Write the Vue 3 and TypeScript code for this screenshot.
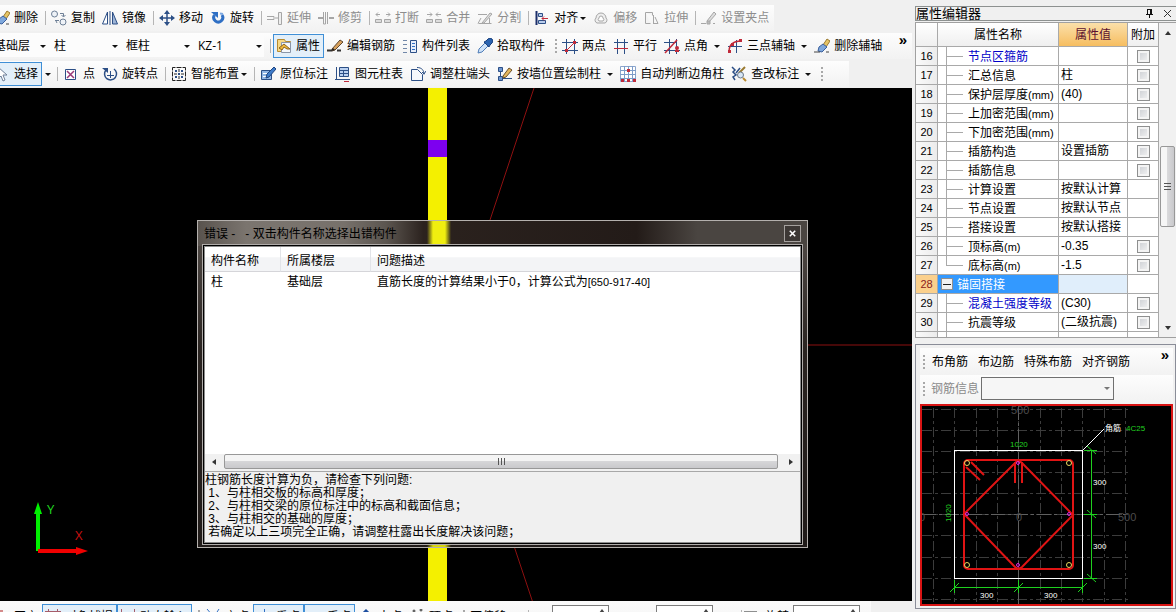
<script setup lang="ts">
import { ref } from 'vue'

type Shape = [d: string, stroke: string, fill?: string, width?: number]

interface Tool {
  kind: 'tool' | 'sep' | 'grip' | 'arrow'
  icon?: string
  label?: string
  off?: boolean
  on?: boolean
  drop?: 'near' | 'far'
}

const tool = (icon: string, label: string, extra: Partial<Tool> = {}): Tool => ({ kind: 'tool', icon, label, ...extra })
const sep: Tool = { kind: 'sep' }
const grip: Tool = { kind: 'grip' }

const navy = '#2c4f86'
const blue = '#2f6fc4'
const red = '#c02a3a'
const gray = '#a6a6a6'

const icons: Record<string, Shape[]> = {
  erase: [
    ['M9 7L13 1l3 2-4 6z', '#9a7a30', '#e6c566', 1],
    ['M5 9l4-3 4 3-5 5-4-1z', '#3a5f9c', '#7fa8dc', 1],
    ['M6 10l4 3', '', '#fff'],
    ['M0 14h6M12 14h3', '#444', 'none', 1],
  ],
  copy: [
    ['M.5 4a3 3 0 1 0 6 0a3 3 0 1 0-6 0', '#6d7f96', '#eef2f7', 1],
    ['M9 12a3 3 0 1 0 6 0a3 3 0 1 0-6 0', '#6d7f96', '#eef2f7', 1],
    ['M9 3.500h3.500v3M10.500 5l2 2 2-2', '#6d7f96', 'none', 1],
    ['M4 10.500h4M4.500 10l1.500 3', '#6d7f96', 'none', 1],
  ],
  mirror: [
    ['M5.500 2v12h-5z', navy, '#fff', 1],
    ['M10.500 2v12h5z', navy, '#9db4d6', 1],
    ['M8 1v14', navy, 'none', 1],
  ],
  move: [
    ['M8 2v12M2 8h12', navy, 'none', 1.5],
    ['M8 0l3 4H5zM8 16l3-4H5zM0 8l4-3v6zM16 8l-4-3v6z', '', navy],
  ],
  rotate: [
    ['M4.500 5a4.500 4.500 0 1 0 7.500 0', blue, 'none', 3],
    ['M1 2h7v6z', '', blue],
    ['M10 3.500l3 .5', '#7aa6e0', 'none', 2],
  ],
  extend: [
    ['M0 6.500h7v3H0M8 8h3', gray, 'none', 1],
    ['M11.500 2.500h3v12h-3z', gray, '#eee', 1],
  ],
  trim: [
    ['M0 8h5M11 8h5', gray, 'none', 2],
    ['M5.500 2v12h2V2M9.500 2v12', gray, 'none', 1],
  ],
  split2: [
    ['M1 4.500h4M11 4.500h4M3 2.500L1 4.500l2 2M13 2.500l2 2-2 2', gray, 'none', 1],
    ['M.5 9.500h6v3h-6zM9.500 9.500h6v3h-6z', gray, '#ddd', 1],
  ],
  merge: [
    ['M1 4.500h5M10 4.500h5M4 2.500l2 2-2 2M12 2.500l-2 2 2 2', gray, 'none', 1],
    ['M.5 9.500h6v3h-6zM9.500 9.500h6v3h-6z', gray, '#ddd', 1],
  ],
  cut: [
    ['M1 4.500h9M1.500 13.500h13M1 13.500L4 8', gray, 'none', 1],
    ['M5 13L13 3l2 1-8 9z', gray, '#ddd', 1],
    ['M12.500 8v5', gray, 'none', 1],
  ],
  align: [
    ['M2.500 1v14', '#1c2f6b', 'none', 2],
    ['M4.500 3.500h4v3h-4z', navy, '#b9cdec', 1],
    ['M4.500 10.500h7v3h-7z', navy, '#b9cdec', 1],
    ['M14 8.500H8M10 6.500L8 8.500l2 2', red, 'none', 1],
  ],
  offset: [
    ['M4 13a3 3 0 0 1-1-5a5 5 0 0 1 10 0a3 3 0 0 1-1 5z', gray, '#eee', 1],
    ['M6 11a2 2 0 0 1 0-3a2 2 0 0 1 4 0a2 2 0 0 1 0 3z', gray, '#fff', 1],
  ],
  stretch: [
    ['M1.500 2.500h7v3M1.500 2.500v11h5', gray, '#f3f3f3', 1],
    ['M9.500 5v9M11 7l3 6.500H9', gray, 'none', 1],
  ],
  clamp: [
    ['M0 13.500h5M12 13.500h2', gray, 'none', 1],
    ['M6 11L13 2l2 2-7 8z', gray, '#ddd', 1],
    ['M6 11h3v3H6z', gray, '#bbb', 1],
  ],
  props: [
    ['M1.500 1.500h7l1 2h5v10h-13z', '#b88a2e', '#f7d884', 1],
    ['M5.500 4.500h9v10h-9z', '#8a96a8', '#f6f8fb', 1],
    ['M3 10l5-4 6 5h-3l-3-2-2 3z', '#8a6420', '#f0b83c', 1],
  ],
  editbar: [
    ['M0 12.500h5M10 12.500h4', '#333', 'none', 2],
    ['M5 11L13 2l3 2-8 8-3 1z', '#5c4630', '#d7a05c', 1],
    ['M4 13l4-1-2-2z', '', '#222'],
  ],
  list: [
    ['M1 2.500h4M1 6.500h4M1 10.500h4M1 14.500h4', '#7187a8', 'none', 1],
    ['M8.500 2.500h6v12h-6z', navy, '#e7eefa', 1],
    ['M10 5.500h3M10 8.500h3M10 11.500h3', blue, 'none', 1],
  ],
  pick: [
    ['M1 15l1-4 6-6 3 3-6 6z', '#4f7db8', '#cfe2f7', 1],
    ['M7 4l5 5 1-2 2-2a2.500 2.500 0 0 0-4-4L9 3z', '#193f7c', '#2a63b0', 1],
  ],
  twopt: [
    ['M4.500 1v15M12.500 1v15M0 4.500h16M0 12.500h16', navy, 'none', 1],
    ['M4 13L13 4', red, 'none', 1],
    ['M3 11h3v3H3zM11 3h3v3h-3z', '', red],
  ],
  parallel: [
    ['M4.500 1v15M11.500 1v15M1 4.500h14', navy, 'none', 1],
    ['M1 10.500h14', red, 'none', 1],
  ],
  angle: [
    ['M5.500 1v15M12.500 1v15M0 4.500h13M0 12.500h16', navy, 'none', 1],
    ['M1 15L13 2', red, 'none', 1.5],
    ['M11 10a2 2 0 1 0 4 0a2 2 0 1 0-4 0M11 12h4v2h-4z', '', red],
  ],
  arc: [
    ['M9.500 2v13M1 8.500h14', navy, 'none', 1],
    ['M2 14C2 7 6 3 14 3', red, 'none', 1.5],
    ['M1 12h3v3H1zM12 1h3v3h-3zM4 5h3v3H4z', '', red],
  ],
  select: [['M4 1v12l3-3 2 5 2-1-2-5h4z', '#6e7f98', '#fff', 1]],
  point: [
    ['M2.500 3.500h10v10h-10z', navy, '#fff', 1],
    ['M4 5l7 7M11 5l-7 7', '#9a3a78', 'none', 1.5],
  ],
  rotpt: [
    ['M4 4a6 6 0 1 0 8-1', navy, 'none', 1.5],
    ['M0 2h6v5z', '', navy],
    ['M8.500 5v7M5 9.500h7', navy, 'none', 1],
  ],
  smart: [
    ['M1.500 1.500h13v13h-13z', '#222', 'none', 1],
    ['M5 0v16M11 0v16M0 5h16M0 11h16', '#fff', 'none', 1],
    ['M8 3v3M8 10v3M3 8h3M10 8h3', '#222', 'none', 1],
    ['M4 4h2v2H4zM10 4h2v2h-2zM4 10h2v2H4zM10 10h2v2h-2zM7 7h2v2H7z', '', navy],
  ],
  origin: [
    ['M1.500 4.500h10v9h-10z', navy, '#8fb4e4', 1],
    ['M3 7.500h5M3 10.500h4', '#fff', 'none', 1],
    ['M6 12l1-4 7-7 2 2-7 8z', '#1f4480', '#3d7bc9', 1],
  ],
  chart: [
    ['M1.500 1v12M0 13.500h15', navy, 'none', 1],
    ['M4.500 1.500h9v9h-9z', navy, '#b9d0f0', 1],
    ['M5 4.500h8M5 7.500h8M8.500 5v5', navy, 'none', 1],
    ['M9 15.500h5', red, 'none', 1],
  ],
  endcap: [
    ['M1.500 3.500h6l5 5v6h-11z', navy, '#f4f7fc', 1],
    ['M7 1.500c5 0 7 3 7 7M12 6l2 2 2-3', navy, 'none', 1],
  ],
  wallcol: [
    ['M1.500 1.500h4v4h-4zM1.500 10.500h4v4h-4z', navy, '#6f97d0', 1],
    ['M3.500 6v4M6 12.500h9', navy, 'none', 1],
    ['M6 10L12 2l3 2-6 7-3 1z', '#6b512a', '#e4b65e', 1],
  ],
  grid: [
    ['M.5 .5h15v15H.5z', '#8aa5cc', '#fff', 1],
    ['M4.500 0v16M8.500 0v16M12.500 0v16M0 4.500h16M0 8.500h16M0 12.500h16', '#7d9cc8', 'none', 1],
    ['M7 3h3v3H7zM1 13h3v3H1zM7 13h3v3H7zM13 13h3v3h-3z', '', red],
  ],
  review: [
    ['M1 1l3 3-2 2 3 3-3 2 2 3M9 2l-4 5', navy, 'none', 1.5],
    ['M14 1L8 7', '#9a7a30', 'none', 2],
    ['M6.500 9a3 3 0 1 0 6 0a3 3 0 1 0-6 0', '#6a7786', '#d7e6f5', 1],
    ['M12 12l3 3', '#b98a30', 'none', 2],
  ],
  ortho: [['M0 1h9v8H0z', '', '#d48a8a']],
  snap: [['M3.500 0v12M12.500 0v12M0 2.500h16', '#a65d6a', 'none', 1]],
  dyn: [['M1.500 0v12M14.500 0v12M1 3.500h13', '#a65d6a', 'none', 1]],
  cross: [['M2 0l11 13M14 0L5 14', blue, 'none', 1]],
  heavy: [['M8.500 0v13M1 13.500h14', blue, 'none', 1]],
  perp: [['M8.500 8v6M1 13.500h14', blue, 'none', 1]],
  mid: [['M8 1l6 6H2z', '#1e4fa0', '#dfeafb', 1.5]],
  vertex: [['M4 2a1 1 0 1 0 2 0a1 1 0 1 0-2 0M11 1a1 1 0 1 0 2 0a1 1 0 1 0-2 0M4 6v8M12 6v8', '#333', 'none', 1]],
}

const editTools: Tool[] = [
  tool('erase', '删除'), sep,
  tool('copy', '复制'), tool('mirror', '镜像'), sep,
  tool('move', '移动'), tool('rotate', '旋转'), sep,
  tool('extend', '延伸', { off: true }), tool('trim', '修剪', { off: true }), sep,
  tool('split2', '打断', { off: true }), tool('merge', '合并', { off: true }), tool('cut', '分割', { off: true }), sep,
  tool('align', '对齐', { drop: 'near' }),
  tool('offset', '偏移', { off: true }), tool('stretch', '拉伸', { off: true }), sep,
  tool('clamp', '设置夹点', { off: true }),
]

const memberTools: Tool[] = [
  sep,
  tool('props', '属性', { on: true }),
  tool('editbar', '编辑钢筋'), tool('list', '构件列表'), tool('pick', '拾取构件'), grip,
  tool('twopt', '两点'), tool('parallel', '平行'), tool('angle', '点角', { drop: 'far' }),
  tool('arc', '三点辅轴', { drop: 'far' }), tool('erase', '删除辅轴'),
]

const drawTools: Tool[] = [
  tool('select', '选择', { on: true }), { kind: 'arrow' }, sep,
  tool('point', '点'), tool('rotpt', '旋转点'), sep,
  tool('smart', '智能布置', { drop: 'near' }), sep,
  tool('origin', '原位标注'), tool('chart', '图元柱表'), tool('endcap', '调整柱端头'),
  tool('wallcol', '按墙位置绘制柱', { drop: 'far' }),
  tool('grid', '自动判断边角柱'), tool('review', '查改标注', { drop: 'far' }), grip,
]

const snapTools: Tool[] = [
  tool('ortho', '正交'), tool('snap', '对象捕捉', { on: true }), tool('dyn', '动态输入', { on: true }), grip,
  tool('cross', '交点'), tool('heavy', '重点', { on: true }), tool('perp', '垂点', { on: true }),
  tool('mid', '中点'), tool('vertex', '顶点'), grip,
]

const pickers = [
  { name: '楼层', value: '基础层' },
  { name: '构件类型', value: '柱' },
  { name: '构件分类', value: '框柱' },
  { name: '构件', value: 'KZ-1' },
]

interface Prop {
  no: number
  name: string
  unit?: string
  value?: string
  check?: boolean
  link?: boolean
  last?: boolean
  group?: boolean
}

const props: Prop[] = [
  { no: 16, name: '节点区箍筋', check: true, link: true },
  { no: 17, name: '汇总信息', value: '柱', check: true },
  { no: 18, name: '保护层厚度', unit: '(mm)', value: '(40)', check: true },
  { no: 19, name: '上加密范围', unit: '(mm)', check: true },
  { no: 20, name: '下加密范围', unit: '(mm)', check: true },
  { no: 21, name: '插筋构造', value: '设置插筋', check: true },
  { no: 22, name: '插筋信息', check: true },
  { no: 23, name: '计算设置', value: '按默认计算' },
  { no: 24, name: '节点设置', value: '按默认节点' },
  { no: 25, name: '搭接设置', value: '按默认搭接' },
  { no: 26, name: '顶标高', unit: '(m)', value: '-0.35', check: true },
  { no: 27, name: '底标高', unit: '(m)', value: '-1.5', check: true, last: true },
  { no: 28, name: '锚固搭接', group: true },
  { no: 29, name: '混凝土强度等级', value: '(C30)', check: true, link: true },
  { no: 30, name: '抗震等级', value: '(二级抗震)', check: true },
]

const notes = [
  '柱钢筋长度计算为负，请检查下列问题:',
  ' 1、与柱相交板的标高和厚度；',
  ' 2、与柱相交梁的原位标注中的标高和截面信息；',
  ' 3、与柱相交的基础的厚度；',
  ' 若确定以上三项完全正确，请调整柱露出长度解决该问题；',
]

const rebarTools = ['布角筋', '布边筋', '特殊布筋', '对齐钢筋']
const gridX = [933, 954, 976, 997, 1018, 1040, 1061, 1082, 1104, 1125]
const gridY = [409, 430, 451, 472, 493, 514, 535, 557, 578, 599]

const toolRows = [
  { id: 'edit', items: editTools },
  { id: 'member', items: memberTools },
  { id: 'draw', items: drawTools },
]

const offsetX = ref('0')
const offsetY = ref('0')
const turn = ref('0.000')
</script>

<template>
  <div class="app">
    <main class="work">
      <header class="bars">
        <div v-for="row in toolRows" :key="row.id" class="bar" :class="row.id">
          <template v-if="row.id === 'member'">
            <label v-for="p in pickers" :key="p.name" class="picker">
              <select :aria-label="p.name"><option>{{ p.value }}</option></select>
              <i class="tri"></i>
            </label>
          </template>
          <template v-for="(t, i) in row.items" :key="i">
            <i v-if="t.kind === 'sep'" class="sep"></i>
            <i v-else-if="t.kind === 'grip'" class="grip"></i>
            <button v-else-if="t.kind === 'arrow'" class="drop far" aria-label="更多选择"><i class="tri"></i></button>
            <button v-else class="tool" :class="{ on: t.on }" :disabled="t.off">
              <svg class="ico" viewBox="0 0 16 16">
                <path v-for="(s, k) in icons[t.icon!]" :key="k" :d="s[0]" :stroke="s[1] || 'none'" :fill="s[2] || 'none'" :stroke-width="s[3] || 1" />
              </svg>
              <span>{{ t.label }}</span>
              <span v-if="t.drop" class="drop" :class="t.drop"><i class="tri"></i></span>
            </button>
          </template>
          <button v-if="row.id === 'member'" class="more">»</button>
        </div>
      </header>

      <section class="canvas">
        <svg class="scene">
          <path d="M534 0L490 132M514 458L538 530" stroke="#8c1010" fill="none" />
          <line x1="800" y1="257" x2="100%" y2="257" stroke="#8c1010" />
          <rect x="428" y="0" width="19" height="100%" fill="#f4f000" />
          <rect x="428" y="52" width="19" height="17" fill="#7d00f0" />
          <path d="M38 463V424" stroke="#00f000" stroke-width="4" />
          <path d="M38 414l4 12h-8z" fill="#00f000" />
          <path d="M38 463H76" stroke="#f00000" stroke-width="4" />
          <path d="M88 463l-12-4v8z" fill="#f00000" />
          <text x="47" y="426" fill="#20d820" class="axis">Y</text>
          <text x="75" y="452" fill="#c81010" class="axis">X</text>
        </svg>

        <div class="dialog" role="dialog" aria-labelledby="err-title">
          <div class="caption">
            <span id="err-title">错误 -&nbsp;&nbsp; - 双击构件名称选择出错构件</span>
            <button class="close" aria-label="关闭">
              <svg viewBox="0 0 9 9"><path d="M1 1l7 7M8 1L1 8" stroke="#fff" stroke-width="2" /></svg>
            </button>
          </div>
          <div class="content">
            <div class="listing">
              <table class="errors">
                <colgroup><col class="c1" /><col class="c2" /><col /></colgroup>
                <thead><tr><th>构件名称</th><th>所属楼层</th><th>问题描述</th></tr></thead>
                <tbody><tr><td>柱</td><td>基础层</td><td>直筋长度的计算结果小于0，计算公式为<span class="formula">[650-917-40]</span></td></tr></tbody>
              </table>
            </div>
            <div class="hscroll">
              <i class="arr left"></i>
              <div class="hthumb"><i></i><i></i><i></i></div>
              <i class="arr right"></i>
            </div>
            <div class="notes">
              <p v-for="n in notes" :key="n">{{ n }}</p>
            </div>
          </div>
        </div>
      </section>

      <footer class="status">
        <div class="statusbar">
          <template v-for="(t, i) in snapTools" :key="i">
            <i v-if="t.kind === 'grip'" class="grip"></i>
            <button v-else class="tool" :class="{ on: t.on }">
              <svg class="ico" viewBox="0 0 16 16">
                <path v-for="(s, k) in icons[t.icon!]" :key="k" :d="s[0]" :stroke="s[1] || 'none'" :fill="s[2] || 'none'" :stroke-width="s[3] || 1" />
              </svg>
              <span>{{ t.label }}</span>
            </button>
          </template>
          <button class="plain">不偏移</button>
          <i class="sep"></i>
          <label class="num xo">X=<input v-model="offsetX" /><i class="spin"></i></label>
          <label class="num yo">Y=<input v-model="offsetY" /><i class="spin"></i></label>
          <i class="sep"></i>
          <label class="turn"><input type="checkbox" class="tick" />旋转</label>
          <label class="num ro"><input v-model="turn" aria-label="旋转角度" /><i class="spin"></i></label>
        </div>
      </footer>
    </main>

    <aside class="side">
      <div class="title">
        <h1>属性编辑器</h1>
        <button aria-label="固定"><svg viewBox="0 0 9 9"><path d="M2.500 0v5M2 .5h4M1 5.500h7M4.500 6v3" stroke="#111" fill="none" /><path d="M5 0h2v5H5z" fill="#111" /></svg></button>
        <button aria-label="关闭"><svg viewBox="0 0 9 9"><path d="M1 1l7 7M8 1L1 8" stroke="#333" /></svg></button>
      </div>
      <div class="propbox">
        <table class="props">
          <colgroup><col class="no" /><col /><col class="val" /><col class="add" /></colgroup>
          <thead><tr><th></th><th>属性名称</th><th class="hot">属性值</th><th class="tight">附加</th></tr></thead>
          <tbody>
            <tr v-for="p in props" :key="p.no" :class="{ group: p.group }">
              <th scope="row">{{ p.no }}</th>
              <td>
                <div class="name" :class="{ link: p.link }">
                  <button v-if="p.group" class="fold" aria-label="折叠"></button>
                  <i v-else class="branch" :class="{ last: p.last }"></i>
                  <span>{{ p.name }}<small v-if="p.unit">{{ p.unit }}</small></span>
                </div>
              </td>
              <td class="value">{{ p.value }}</td>
              <td><div class="center"><input v-if="p.check" type="checkbox" class="tick" :aria-label="p.name + '附加'" /></div></td>
            </tr>
            <tr><th></th><td><div class="name"><i class="branch"></i></div></td><td></td><td></td></tr>
          </tbody>
        </table>
        <div class="vscroll">
          <i class="arr up"></i>
          <div class="vthumb"><i></i><i></i><i></i></div>
          <i class="arr down"></i>
        </div>
      </div>

      <section class="rebar">
        <div class="rbar">
          <i class="grip"></i>
          <button v-for="r in rebarTools" :key="r">{{ r }}</button>
          <button class="more">»</button>
        </div>
        <label class="rbar info">
          <i class="grip"></i>
          <span>钢筋信息</span>
          <span class="combo"><select disabled><option></option></select><i class="tri"></i></span>
        </label>
        <div class="section">
          <svg viewBox="922 406 249 198" preserveAspectRatio="xMinYMin meet">
            <g stroke="#3c3c3c" stroke-dasharray="10 3 3 3">
              <line v-for="x in gridX" :key="x" :x1="x + 0.5" y1="408" :x2="x + 0.5" y2="602" />
              <line v-for="y in gridY" :key="y" x1="922" :y1="y + 0.5" x2="1128" :y2="y + 0.5" />
            </g>
            <path d="M1018.500 406v198M922 514.500h206" stroke="#606060" stroke-dasharray="14 3 3 3" />
            <g fill="#4c4c4c" font-size="11">
              <text x="1011" y="414">500</text>
              <text x="1118" y="521">500</text>
              <text x="1016" y="521">0</text>
              <text x="919" y="521">0</text>
            </g>
            <rect x="954.500" y="450.500" width="128" height="128" fill="none" stroke="#fff" />
            <path d="M1083 450l21-21" stroke="#fff" />
            <g fill="none" stroke="#e01414" stroke-width="2">
              <rect x="964" y="460" width="109" height="109" rx="4" />
              <path d="M1015 463L964 514L1015 567Q1018 570 1022 567L1073 515L1022 463Q1018 459 1015 463" />
              <path d="M1015 462v21M1022 462v21M966 467l14 13M971 462l13 13" />
            </g>
            <g fill="none" stroke="#e8d860">
              <circle v-for="c in [[967, 463], [1069, 463], [967, 565], [1069, 565]]" :key="c.join()" :cx="c[0]" :cy="c[1]" r="2.500" />
            </g>
            <g fill="none" stroke="#e020e0">
              <circle v-for="c in [[1018, 463], [967, 514], [1069, 514], [1018, 565]]" :key="c.join()" :cx="c[0]" :cy="c[1]" r="1.500" />
            </g>
            <g fill="none" stroke="#1fd01f">
              <path d="M1091.500 450v129M1084 450.500h13M1084 514.500h13M1084 578.500h13M1087 446l9 8M1087 510l9 8M1087 574l9 8" />
              <path d="M954 587.500h129M954.500 580v13M1018.500 580v13M1082.500 580v13M950 592l9-9M1014 592l9-9M1078 592l9-9" />
            </g>
            <g class="dim" fill="#fff">
              <text x="1093" y="485">300</text>
              <text x="1093" y="549">300</text>
              <text x="980" y="598">300</text>
              <text x="1044" y="598">300</text>
              <text x="1105" y="431">角筋</text>
            </g>
            <g class="dim" fill="#20d020">
              <text x="1010" y="447">1020</text>
              <text x="1126" y="431">4C25</text>
              <text transform="translate(951 522) rotate(-90)">1020</text>
            </g>
          </svg>
        </div>
      </section>
    </aside>
  </div>
</template>

<style>
html,
body {
  overflow: hidden;
  background: #f0f0f0;
}
</style>

<style scoped>
* {
  box-sizing: border-box;
}
.app {
  display: grid;
  grid-template-columns: minmax(0, 1fr) 264px;
  height: 100vh;
  overflow: hidden;
  background: #f0f0f0;
  color: #000;
  font: 12px/16px "Liberation Sans", "Noto Sans CJK SC", sans-serif;
}
button,
input,
select {
  margin: 0;
  padding: 0;
  border: 0;
  border-radius: 0;
  background: none;
  color: inherit;
  font: inherit;
  appearance: none;
  opacity: 1;
}
i {
  flex: none;
}
.work {
  display: flex;
  flex-direction: column;
  min-width: 0;
  min-height: 0;
}

/* toolbars */
.bars {
  display: flex;
  flex-direction: column;
  align-items: flex-start;
  gap: 2px;
  padding: 5px 0 1px;
  overflow: hidden;
}
.bar {
  display: flex;
  align-items: center;
  height: 26px;
  padding-right: 1px;
  background: linear-gradient(#fdfdfd, #f2f2f2);
  white-space: nowrap;
}
.bar.edit {
  margin-left: -9px;
}
.bar.draw {
  margin-left: -9px;
  padding-right: 24px;
}
.bar.member {
  align-self: stretch;
  margin-left: -12px;
}
.tool {
  display: flex;
  flex: none;
  align-items: center;
  height: 24px;
  padding: 0 4px 0 3px;
  white-space: nowrap;
}
.tool:disabled {
  color: #8d8d8d;
}
.tool.on {
  background: #e3eff9;
  box-shadow: inset 0 0 0 1px #3f8fd6;
}
.ico {
  width: 16px;
  height: 16px;
  margin-right: 4px;
  overflow: hidden;
}
.sep {
  width: 1px;
  height: 14px;
  margin: 0 2px 0 3px;
  background: #b5b5b5;
}
.grip {
  width: 2px;
  height: 14px;
  margin: 0 2px 0 6px;
  background: repeating-linear-gradient(#a8a8a8 0 2px, transparent 2px 4px);
}
.drop {
  display: flex;
  align-items: center;
  justify-content: flex-end;
}
.drop.near {
  width: 8px;
}
.drop.far {
  width: 12px;
}
.bar > .drop.far {
  justify-content: center;
}
.tri {
  width: 0;
  height: 0;
  border: 3px solid transparent;
  border-top-color: #111;
  border-bottom: 0;
}
.picker {
  display: grid;
  flex: none;
  align-items: center;
  width: 72px;
  height: 22px;
  background: #fcfcfc;
}
.picker:first-child {
  width: 60px;
}
.picker > *,
.combo > * {
  grid-area: 1 / 1;
}
.picker select {
  width: 100%;
  padding-left: 6px;
  font-family: "Open Sans", "Noto Sans CJK SC", sans-serif;
}
.picker .tri,
.combo .tri {
  justify-self: end;
  margin-right: 2px;
  pointer-events: none;
}
.member .sep {
  margin-left: 6px;
}
.more {
  align-self: flex-start;
  margin-left: auto;
  padding-right: 4px;
  font-size: 15px;
  line-height: 14px;
  font-weight: bold;
}

/* drawing area */
.canvas {
  position: relative;
  flex: 1;
  min-height: 0;
  overflow: hidden;
  background: #000;
}
.scene {
  display: block;
  width: 100%;
  height: 100%;
}
.axis {
  font-family: "Open Sans", sans-serif;
  font-size: 13px;
}
.dialog {
  position: absolute;
  top: 132px;
  left: 197px;
  display: flex;
  flex-direction: column;
  width: 611px;
  height: 328px;
  padding: 0 6px 4px;
  border: 1px solid #b4b0ad;
  background:
    linear-gradient(90deg, transparent, #f0ee10 6px, #f0ee10 18px, transparent) 229px 0 / 24px 24px no-repeat,
    linear-gradient(90deg, transparent, #d8d60e 6px, #d8d60e 18px, transparent) 229px 100% / 24px 4px no-repeat,
    linear-gradient(90deg, #59534e, #7b756f 8%, #77716b 24%, #5b554f 31%, #2b221e 37%, #231b18 72%, #4a4541 82%, #4a4541) 0 0 / 100% 25px no-repeat,
    linear-gradient(#544e4a, #2a2421 40%, #201b19);
}
.caption {
  display: flex;
  flex: none;
  align-items: center;
  justify-content: space-between;
  height: 25px;
  white-space: pre;
}
.close {
  display: grid;
  place-items: center;
  width: 17px;
  height: 17px;
  border: 1px solid #a5a19e;
  background: #3d3835;
}
.close svg {
  width: 7px;
  height: 7px;
}
.content {
  display: flex;
  flex: 1;
  flex-direction: column;
  min-height: 0;
  border: 1px solid #8c8c8c;
  box-shadow: 0 0 0 1px #000, 0 0 0 2px #b0acaa;
  background: #f0f0f0;
}
.listing {
  flex: 1;
  background: #fff;
}
.errors {
  width: 100%;
  border-collapse: separate;
  border-spacing: 0;
  table-layout: fixed;
}
.c1 {
  width: 76px;
}
.c2 {
  width: 90px;
}
.errors th,
.errors td {
  height: 20px;
  padding: 0 6px;
  font-weight: normal;
  text-align: left;
  white-space: nowrap;
}
.errors th {
  height: 25px;
  padding-top: 3px;
  border-right: 1px solid #e2e4e8;
  border-bottom: 1px solid #d5d5d9;
  background: linear-gradient(#fff 40%, #f3f4f6 45%, #f3f4f6);
}
.errors th:last-child {
  border-right: 0;
}
.formula {
  font-size: 11px;
}
.hscroll {
  display: flex;
  align-items: center;
  justify-content: space-between;
  height: 18px;
  padding: 0 7px 2px;
  border-bottom: 1px solid #a8a8a8;
  background: #f1f1f1;
}
.hthumb {
  display: flex;
  flex: 1;
  align-items: center;
  justify-content: center;
  gap: 2px;
  height: 15px;
  margin: 0 11px 0 8px;
  border: 1px solid #989898;
  border-radius: 2px;
  background: linear-gradient(#f4f4f4 45%, #d6d6d8 50%, #c9c9cc);
}
.hthumb i {
  width: 1px;
  height: 7px;
  background: #555;
}
.arr {
  border: 3px solid transparent;
}
.arr.left {
  border-right: 4px solid #333;
  border-left: 0;
}
.arr.right {
  border-right: 0;
  border-left: 4px solid #333;
}
.arr.up {
  border-top: 0;
  border-bottom: 4px solid #333;
}
.arr.down {
  border-top: 4px solid #333;
  border-bottom: 0;
}
.notes {
  height: 70px;
  padding-top: 2px;
}
.notes p {
  margin: 0;
  line-height: 13px;
  white-space: pre;
}

/* bottom bar */
.status {
  flex: none;
  height: 11px;
  overflow: hidden;
}
.statusbar {
  display: flex;
  align-items: center;
  width: 880px;
  height: 32px;
  margin-left: -9px;
  background: linear-gradient(#fbfbfb, #f2f2f2);
  white-space: nowrap;
}
.statusbar .tool {
  height: 26px;
}
.plain {
  width: 58px;
  text-align: left;
  padding-left: 3px;
}
.num {
  display: flex;
  align-items: center;
  height: 24px;
  padding-left: 4px;
}
.num input {
  width: 57px;
  height: 24px;
  margin-left: 2px;
  padding-right: 16px;
  border: 1px solid #7c7c7c;
  background: #fff;
  text-align: right;
}
.spin {
  width: 0;
  height: 0;
  margin: 0 4px 12px -10px;
  border: 3px solid transparent;
  border-top: 0;
  border-bottom: 4px solid #444;
}
.yo {
  padding-left: 30px;
}
.yo + .sep {
  margin-left: 28px;
}
.turn {
  display: flex;
  align-items: center;
  gap: 8px;
}
.ro {
  padding-left: 2px;
}
.ro input {
  width: 67px;
}

/* property panel */
.side {
  display: flex;
  flex-direction: column;
  min-height: 0;
  padding: 6px 0 3px 3px;
}
.title {
  display: flex;
  flex: none;
  align-items: center;
  gap: 9px;
  height: 15px;
  padding-right: 4px;
  border: solid #8d9190;
  border-width: 1px 0 1px 1px;
}
.title h1 {
  flex: 1;
  margin: 0;
  font-size: 13px;
  line-height: 13px;
  font-weight: normal;
}
.title button {
  display: flex;
}
.title svg {
  width: 9px;
  height: 9px;
}
.propbox {
  display: flex;
  align-items: flex-start;
  flex: none;
  height: 316px;
  margin-top: 1px;
  overflow: hidden;
  border: solid #a0a0a0;
  border-width: 1px 0 1px 1px;
}
.props {
  flex: 1;
  width: 0;
  border-collapse: separate;
  border-spacing: 0;
  table-layout: fixed;
  background: #fff;
}
.props .no {
  width: 22px;
}
.props .val {
  width: 69px;
}
.props .add {
  width: 31px;
}
.props th,
.props td {
  height: 19px;
  padding: 0;
  border: solid #a9a9a9;
  border-width: 0 1px 1px 0;
  font-weight: normal;
  line-height: 16px;
  white-space: nowrap;
}
.props thead th {
  height: 24px;
  background: linear-gradient(#fff, #efefef);
}
.props thead .hot {
  background: linear-gradient(#fbe0aa, #f6bd60);
  color: #5c1030;
}
.props tbody th {
  background: linear-gradient(90deg, #fafafa, #ececec);
  font-size: 11px;
}
.name {
  display: flex;
  align-items: center;
  height: 18px;
  padding-left: 8px;
}
.name span {
  padding-top: 2px;
  line-height: 16px;
}
.name small {
  font-size: 11px;
}
.name.link {
  color: #0000c8;
}
.branch {
  width: 17px;
  height: 18px;
  margin-right: 5px;
  background:
    linear-gradient(#a9a9a9, #a9a9a9) 0 9px / 17px 1px no-repeat,
    linear-gradient(#a9a9a9, #a9a9a9) 0 0 / 1px 18px no-repeat;
}
.branch.last {
  background-size: 17px 1px, 1px 9px;
}
.props .value {
  padding-left: 2px;
}
.center {
  display: flex;
  align-items: center;
  justify-content: center;
  height: 18px;
}
.tick {
  display: inline-block;
  width: 13px;
  height: 13px;
  border: 1px solid #8e8f8f;
  background: linear-gradient(135deg, #c9ccd1, #f5f5f5);
  box-shadow: inset 0 0 0 2px #f4f4f4;
}
.group th[scope] {
  background: #fbd08c;
  color: #8c2020;
}
.group .name {
  padding-left: 3px;
  background: #3399ff;
  color: #fff;
}
.group .value {
  background: #e0eefb;
}
.fold {
  width: 12px;
  height: 12px;
  margin-right: 4px;
  border: 1px solid #8f8f8f;
  background: linear-gradient(#222, #222) 50% 50% / 8px 1px no-repeat, #f2f2f2;
}
.vscroll {
  display: flex;
  flex-direction: column;
  align-items: center;
  align-self: stretch;
  width: 17px;
  padding: 8px 0 7px;
  background: #f1f1f1;
}
.vthumb {
  display: flex;
  flex-direction: column;
  align-items: center;
  justify-content: center;
  gap: 2px;
  width: 15px;
  height: 81px;
  margin: 111px 0 auto;
  border: 1px solid #989898;
  border-radius: 2px;
  background: linear-gradient(90deg, #f6f6f6 45%, #d9d9db 50%, #c9c9cc);
}
.vthumb i {
  width: 7px;
  height: 1px;
  background: #555;
}

/* rebar section */
.rebar {
  display: flex;
  flex: 1;
  flex-direction: column;
  min-height: 0;
  margin-top: 6px;
  padding: 3px 2px 2px 4px;
  border: 1px solid #8a8d98;
}
.rbar {
  display: flex;
  flex: none;
  align-items: center;
  height: 27px;
  background: linear-gradient(#fdfdfd, #f2f2f2);
  white-space: nowrap;
}
.rbar .grip {
  margin: 0 7px 0 3px;
}
.rbar button {
  margin-right: 10px;
}
.rbar .more {
  margin: 0 0 0 auto;
}
.rbar.info {
  height: 29px;
  padding-bottom: 2px;
  color: #8a8a8a;
}
.info .grip {
  margin-right: 6px;
}
.combo {
  display: grid;
  align-items: center;
  width: 133px;
  margin-left: 2px;
}
.combo select {
  width: 100%;
  height: 23px;
  border: 1px solid #707070;
  background: #f6f6f6;
}
.combo .tri {
  margin-right: 4px;
  border-top-color: #777;
}
.section {
  flex: 1;
  min-height: 0;
  overflow: hidden;
  border: 2px solid #d81414;
  background: #000;
}
.section svg {
  display: block;
  width: 100%;
}
.dim {
  font-size: 8px;
}
</style>
